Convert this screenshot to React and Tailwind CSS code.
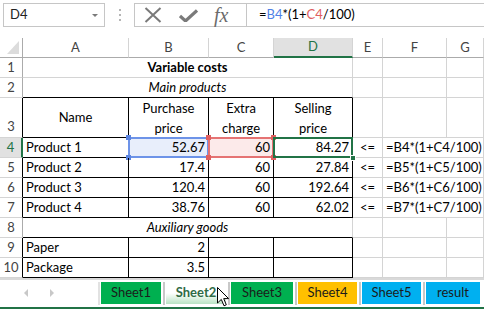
import React from 'react'

// Excel-like sheet: toolbar, grid with selection, sheet tabs.
const GRID = 'grid grid-cols-[23px_106px_80px_65px_79px_30px_64px_1fr]'

const RB = {
  g: 'border-r-[#d4d4d4]',
  k: 'border-r-black',
}
const BB = {
  g: 'border-b-[#d4d4d4]',
  k: 'border-b-black',
}

function Cell({ r = 'g', b = 'g', span = '', align = 'left', className = '', children }) {
  const al =
    align === 'right' ? 'justify-end pr-[3px]' : align === 'center' ? 'justify-center' : 'justify-start pl-[3px]'
  return (
    <div className={`relative flex items-center whitespace-nowrap border-r border-b ${RB[r]} ${BB[b]} ${span} ${al} ${className}`}>
      {children}
    </div>
  )
}

function RowHead({ n, edge = 'gray', active = false, tall = false }) {
  const edgeCls = active
    ? 'border-r-2 border-r-[#217346] bg-[#e1e1e1] text-[#217346]'
    : edge === 'black'
      ? 'border-r border-r-black text-[#444]'
      : 'border-r border-r-[#ababab] text-[#444]'
  return (
    <div
      className={`flex justify-center border-b border-b-[#d4d4d4] ${tall ? 'items-end pb-[1px]' : 'items-center'} ${edgeCls}`}
    >
      {n}
    </div>
  )
}

function Corners({ color }) {
  return (
    <>
      <span className={`absolute -left-[3px] -top-[3px] h-[5px] w-[5px] ${color}`} />
      <span className={`absolute -right-[3px] -top-[3px] h-[5px] w-[5px] ${color}`} />
      <span className={`absolute -left-[3px] -bottom-[3px] h-[5px] w-[5px] ${color}`} />
      <span className={`absolute -right-[3px] -bottom-[3px] h-[5px] w-[5px] ${color}`} />
    </>
  )
}

function DataRow({ n, name, b, d }) {
  return (
    <>
      <RowHead n={n} edge="black" />
      <Cell r="k" b="k">{name}</Cell>
      <Cell r="k" b="k" align="right">{b}</Cell>
      <Cell r="k" b="k" align="right">60</Cell>
      <Cell r="k" b="k" align="right">{d}</Cell>
      <Cell align="center">&lt;=</Cell>
      <Cell span="col-span-2">{`=B${n}*(1+C${n}/100)`}</Cell>
    </>
  )
}

const tabs = [
  { label: 'Sheet1', cls: 'w-[60px] bg-[#00b050] text-[#1b1b1b]' },
  { label: 'Sheet2', cls: 'w-[60px] bg-gradient-to-b from-white via-white to-[#b9e3c4] font-bold text-[#2f6b45]' },
  { label: 'Sheet3', cls: 'w-[62px] bg-[#00b050] text-[#1b1b1b]' },
  { label: 'Sheet4', cls: 'w-[59px] bg-[#ffc000] text-[#1b1b1b]' },
  { label: 'Sheet5', cls: 'w-[59px] bg-[#00b0f0] text-[#1b1b1b]' },
  { label: 'result', cls: 'w-[54px] bg-[#00b0f0] text-[#1b1b1b]' },
]

export default function App() {
  return (
    <div className="relative h-[309px] w-[484px] overflow-hidden bg-white font-[Lato,Liberation_Sans,sans-serif] text-[13px] text-black">
      {/* formula bar */}
      <div className="flex h-[38px] items-start pl-[3px] pt-[3px]">
        <div className="flex h-[24px] w-[102px] items-center justify-between border border-[#c6c6c6] pl-[6px] pr-[6px] text-[#222]">
          <span>D4</span>
          <span className="h-0 w-0 border-x-[3px] border-t-[3px] border-x-transparent border-t-[#7a7a7a]" />
        </div>
        <div className="flex h-[24px] w-[29px] flex-col items-center justify-center gap-[3px]">
          <span className="h-[2px] w-[2px] bg-[#b5b5b5]" />
          <span className="h-[2px] w-[2px] bg-[#b5b5b5]" />
          <span className="h-[2px] w-[2px] bg-[#b5b5b5]" />
        </div>
        <div className="flex h-[24px] flex-1 border border-r-0 border-[#c6c6c6]">
          <div className="flex w-[112px] items-center border-r border-r-[#c6c6c6] pl-[9px]">
            <svg width="18" height="16" viewBox="0 0 18 16" className="mr-[17px]">
              <path d="M1.5 1 L16.5 15 M16.5 1 L1.5 15" stroke="#7a7a7a" strokeWidth="2" fill="none" />
            </svg>
            <svg width="19" height="13" viewBox="0 0 19 13" className="mr-[16px]">
              <path d="M1 7 L6.5 12 L18 1.5" stroke="#7a7a7a" strokeWidth="3.2" fill="none" />
            </svg>
            <span className="font-[Liberation_Serif,serif] text-[20px] italic leading-none text-[#6b6b6b]">fx</span>
          </div>
          <div className="flex items-center pl-[12px]">
            =<span className="text-[#4f81e6]">B4</span>*(1+<span className="text-[#e06060]">C4</span>/100)
          </div>
        </div>
      </div>

      {/* sheet grid */}
      <div className={GRID}>
        {/* column headers */}
        <div className="relative h-[20px] border-r border-b border-r-[#ababab] border-b-[#ababab]">
          <svg width="12" height="13" viewBox="0 0 12 13" className="absolute bottom-[3px] right-[3px]">
            <path d="M12 0 L12 13 L0 13 Z" fill="#dcdcdc" />
          </svg>
        </div>
        {['A', 'B', 'C'].map((l) => (
          <div key={l} className="flex h-[20px] items-center justify-center border-r border-b border-r-[#d4d4d4] border-b-[#ababab] text-[#444]">
            {l}
          </div>
        ))}
        <div className="flex h-[20px] items-center justify-center border-r border-b-2 border-r-[#d4d4d4] border-b-[#217346] bg-[#e1e1e1] text-[#217346]">
          D
        </div>
        {['E', 'F', 'G'].map((l) => (
          <div key={l} className="flex h-[20px] items-center justify-center border-r border-b border-r-[#d4d4d4] border-b-[#ababab] text-[#444]">
            {l}
          </div>
        ))}

        {/* row 1 */}
        <div className="contents [&>div]:h-[20px]">
          <RowHead n="1" />
          <Cell span="col-span-4" align="center" className="font-bold">Variable costs</Cell>
          <Cell />
          <Cell />
          <Cell />
        </div>

        {/* row 2 */}
        <div className="contents [&>div]:h-[20px]">
          <RowHead n="2" />
          <Cell span="col-span-4" b="k" align="center" className="italic">Main products</Cell>
          <Cell />
          <Cell />
          <Cell />
        </div>

        {/* row 3 */}
        <div className="contents [&>div]:h-[40px]">
          <RowHead n="3" edge="black" tall />
          <Cell r="k" b="k" align="center">Name</Cell>
          <Cell r="k" b="k" align="center" className="flex-col text-center leading-[20px]">
            <span>Purchase</span>
            <span>price</span>
          </Cell>
          <Cell r="k" b="k" align="center" className="flex-col text-center leading-[20px]">
            <span>Extra</span>
            <span>charge</span>
          </Cell>
          <Cell r="k" b="k" align="center" className="flex-col text-center leading-[20px]">
            <span>Selling</span>
            <span>price</span>
          </Cell>
          <Cell />
          <Cell />
          <Cell />
        </div>

        {/* row 4 with selection */}
        <div className="contents [&>div]:h-[20px]">
          <RowHead n="4" active />
          <Cell r="k" b="k">Product 1</Cell>
          <Cell r="k" b="k" align="right" className="bg-[#e8eefb]">
            <span className="absolute -inset-px border-2 border-[#6d93e8]" />
            <Corners color="bg-[#5b84e0]" />
            <span className="relative">52.67</span>
          </Cell>
          <Cell r="k" b="k" align="right" className="z-10 bg-[#fceaea]">
            <span className="absolute -inset-px border-2 border-[#e57373]" />
            <Corners color="bg-[#e06060]" />
            <span className="relative">60</span>
          </Cell>
          <Cell r="k" b="k" align="right" className="z-10">
            <span className="absolute -inset-px border-2 border-[#217346]" />
            <span className="absolute -bottom-[4px] -right-[4px] h-[6px] w-[6px] border border-white bg-[#217346]" />
            <span className="relative">84.27</span>
          </Cell>
          <Cell align="center">&lt;=</Cell>
          <Cell span="col-span-2">=B4*(1+C4/100)</Cell>
        </div>

        <div className="contents [&>div]:h-[20px]">
          <DataRow n={5} name="Product 2" b="17.4" d="27.84" />
          <DataRow n={6} name="Product 3" b="120.4" d="192.64" />
          <DataRow n={7} name="Product 4" b="38.76" d="62.02" />
        </div>

        {/* row 8 */}
        <div className="contents [&>div]:h-[20px]">
          <RowHead n="8" />
          <Cell span="col-span-4" b="k" align="center" className="italic">Auxiliary goods</Cell>
          <Cell />
          <Cell />
          <Cell />
        </div>

        {/* rows 9-10 */}
        <div className="contents [&>div]:h-[20px]">
          <RowHead n="9" edge="black" />
          <Cell r="k" b="k">Paper</Cell>
          <Cell r="k" b="k" align="right">2</Cell>
          <Cell r="k" b="k" />
          <Cell r="k" b="k" />
          <Cell />
          <Cell />
          <Cell />
          <RowHead n="10" edge="black" />
          <Cell r="k" b="k">Package</Cell>
          <Cell r="k" b="k" align="right">3.5</Cell>
          <Cell r="k" b="k" />
          <Cell r="k" b="k" />
          <Cell />
          <Cell />
          <Cell />
        </div>
      </div>

      {/* sheet tabs */}
      <div className="flex h-[29px] items-start border-t-2 border-t-[#d9d9d9] bg-white">
        <div className="flex h-[26px] w-[98px] items-center gap-[22px] pl-[24px]">
          <span className="h-0 w-0 border-y-[4px] border-r-[4px] border-y-transparent border-r-[#c8c8c8]" />
          <span className="h-0 w-0 border-y-[4px] border-l-[4px] border-y-transparent border-l-[#c8c8c8]" />
        </div>
        <div className="flex items-start pt-[2px]">
          {tabs.map((t, i) => (
            <div key={t.label} className="flex items-start">
              <span className={`h-[23px] w-[2px] ${i === 0 ? 'bg-[#e2e2e2]' : 'bg-[#c8c8c8]'}`} />
              <div className={`ml-[1px] mr-[2px] flex h-[22px] items-center justify-center ${t.cls}`}>{t.label}</div>
            </div>
          ))}
        </div>
      </div>
      <div className="h-[2px] bg-[#217346]" />

      {/* mouse pointer over Sheet2 */}
      <svg width="13" height="20" viewBox="0 0 13 20" className="absolute left-[217px] top-[287px]">
        <path d="M0.5 0.5 L0.5 16 L4.3 12.4 L7 18.8 L9.3 17.8 L6.7 11.6 L11.6 11.6 Z" fill="white" stroke="black" strokeWidth="1" />
      </svg>
    </div>
  )
}
